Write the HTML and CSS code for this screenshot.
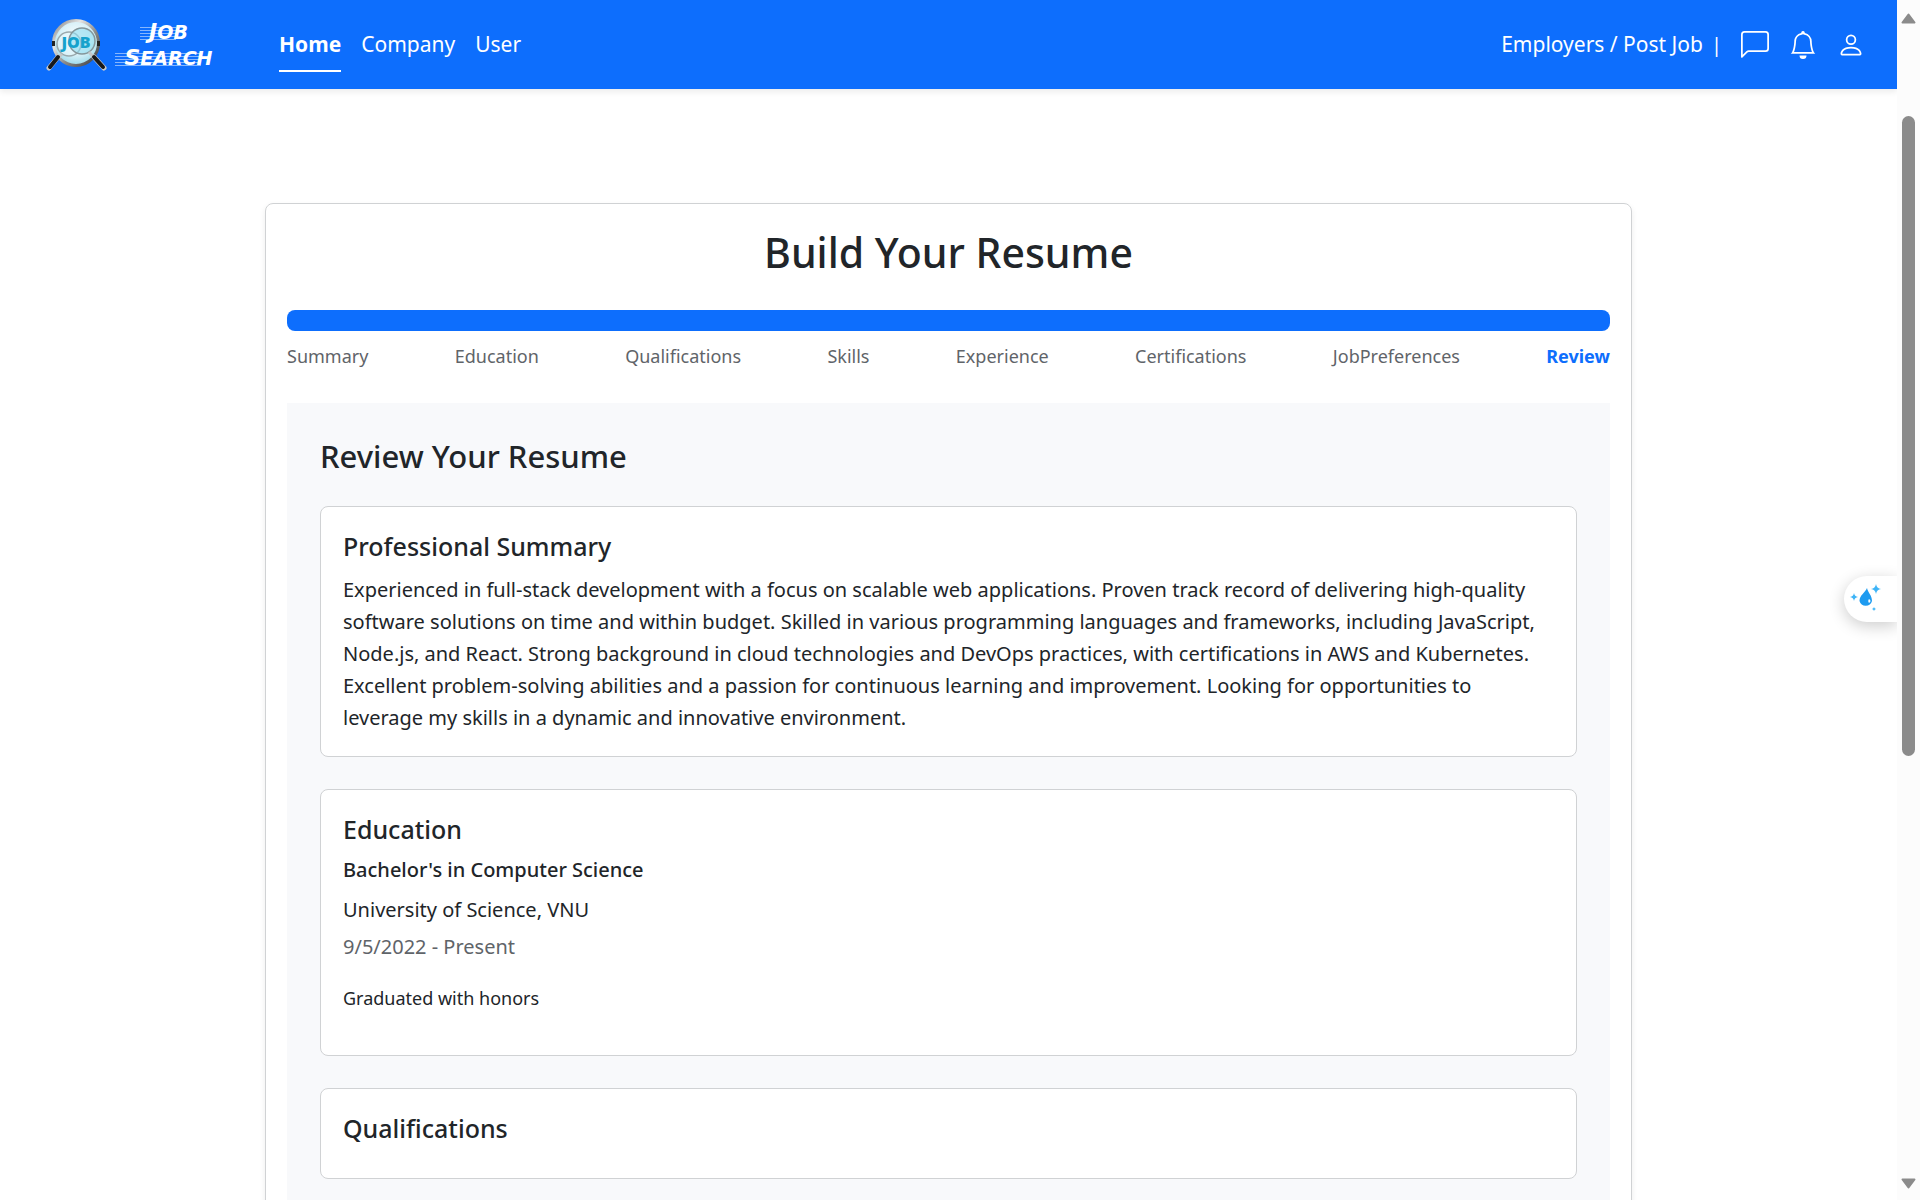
FILE: index.html
```html
<!DOCTYPE html>
<html lang="en">
<head>
<meta charset="utf-8">
<meta name="viewport" content="width=device-width, initial-scale=1">
<title>Build Your Resume</title>
<link rel="stylesheet" href="styles.css">
</head>
<body>
<div class="viewport">
  <div class="page">
    <header class="navbar">
      <a class="brand" href="#">
        <svg class="brand-icon" width="62" height="54" viewBox="0 0 62 54" aria-hidden="true">
          <defs>
            <linearGradient id="rim" x1="0" y1="0" x2="1" y2="1">
              <stop offset="0" stop-color="#777"/><stop offset=".3" stop-color="#e4e4e4"/><stop offset=".6" stop-color="#888"/><stop offset="1" stop-color="#3b3b3b"/>
            </linearGradient>
            <radialGradient id="glass" cx=".5" cy=".4" r=".6">
              <stop offset="0" stop-color="#fff"/><stop offset=".6" stop-color="#d9f1f8"/><stop offset="1" stop-color="#9bd9ea"/>
            </radialGradient>
          </defs>
          <circle cx="31" cy="25" r="22.500" fill="url(#glass)" stroke="url(#rim)" stroke-width="3"/>
          <path d="M8.500 23v5M53.500 23v5" stroke="#222" stroke-width="3"/>
          <circle cx="24" cy="26" r="12" fill="#e4f7fb" fill-opacity=".6" stroke="#9aa9ad" stroke-width="1.500"/>
          <circle cx="37" cy="23" r="13" fill="#8fdcf0" fill-opacity=".6" stroke="#84969b" stroke-width="1.500"/>
          <path d="M17 36l-5 5M44 34l6 7" stroke="#c4c8ca" stroke-width="3"/>
          <path d="M13 39L4 50M49 39l10 11" stroke="#c9c9c9" stroke-width="5" stroke-linecap="round"/>
          <path d="M13 39L5 49M49 39l9 10" stroke="#16181b" stroke-width="4" stroke-linecap="round"/>
          <text class="lens-text" x="31" y="30" text-anchor="middle">JOB</text>
        </svg>
        <span class="brand-text">
          <span class="brand-word"><span class="cap">J</span>OB</span>
          <span class="brand-word"><span class="cap">S</span>EARCH</span>
        </span>
      </a>
      <nav class="links">
        <a class="link active" href="#">Home</a>
        <a class="link" href="#">Company</a>
        <a class="link" href="#">User</a>
      </nav>
      <div class="actions">
        <a class="link" href="#">Employers / Post Job</a>
        <span class="divider">|</span>
        <button class="icon-button" type="button" aria-label="Messages">
          <svg width="28" height="28" viewBox="0 0 16 16" fill="currentColor"><path d="M14 1a1 1 0 0 1 1 1v8a1 1 0 0 1-1 1H4.414A2 2 0 0 0 3 11.586l-2 2V2a1 1 0 0 1 1-1zM2 0a2 2 0 0 0-2 2v12.793a.5.5 0 0 0 .854.353l2.853-2.853A1 1 0 0 1 4.414 12H14a2 2 0 0 0 2-2V2a2 2 0 0 0-2-2z"/></svg>
        </button>
        <button class="icon-button" type="button" aria-label="Notifications">
          <svg width="28" height="28" viewBox="0 0 16 16" fill="currentColor"><path d="M8 16a2 2 0 0 0 2-2H6a2 2 0 0 0 2 2M8 1.918l-.797.161A4 4 0 0 0 4 6c0 .628-.134 2.197-.459 3.742-.16.767-.376 1.566-.663 2.258h10.244c-.287-.692-.502-1.490-.663-2.258C12.134 8.197 12 6.628 12 6a4 4 0 0 0-3.203-3.920zM14.220 12c.223.447.481.801.780 1H1c.299-.199.557-.553.780-1C2.680 10.200 3 6.880 3 6c0-2.420 1.720-4.440 4.005-4.901a1 1 0 1 1 1.990 0A5 5 0 0 1 13 6c0 .880.320 4.200 1.220 6"/></svg>
        </button>
        <button class="icon-button" type="button" aria-label="Account">
          <svg width="28" height="28" viewBox="0 0 16 16" fill="currentColor"><path d="M8 8a3 3 0 1 0 0-6 3 3 0 0 0 0 6m2-3a2 2 0 1 1-4 0 2 2 0 0 1 4 0m4 8c0 1-1 1-1 1H3s-1 0-1-1 1-4 6-4 6 3 6 4m-1-.004c-.001-.246-.154-.986-.832-1.664C11.516 10.680 10.289 10 8 10s-3.516.680-4.168 1.332c-.678.678-.830 1.418-.832 1.664z"/></svg>
        </button>
      </div>
    </header>

    <main class="builder">
      <h1 class="title">Build Your Resume</h1>
      <div class="progress" role="progressbar" aria-label="Resume progress" aria-valuenow="100" aria-valuemin="0" aria-valuemax="100">
        <div class="progress-bar" style="width: 100%"></div>
      </div>
      <ol class="steps">
        <li>Summary</li>
        <li>Education</li>
        <li>Qualifications</li>
        <li>Skills</li>
        <li>Experience</li>
        <li>Certifications</li>
        <li>JobPreferences</li>
        <li class="current">Review</li>
      </ol>
      <section class="review">
        <h2 class="review-title">Review Your Resume</h2>
        <div class="cards">
          <article class="card">
            <h3 class="card-title">Professional Summary</h3>
            <p class="text">Experienced in full-stack development with a focus on scalable web applications. Proven track record of delivering high-quality software solutions on time and within budget. Skilled in various programming languages and frameworks, including JavaScript, Node.js, and React. Strong background in cloud technologies and DevOps practices, with certifications in AWS and Kubernetes. Excellent problem-solving abilities and a passion for continuous learning and improvement. Looking for opportunities to leverage my skills in a dynamic and innovative environment.</p>
          </article>
          <article class="card">
            <h3 class="card-title">Education</h3>
            <h4 class="degree">Bachelor's in Computer Science</h4>
            <p class="text school">University of Science, VNU</p>
            <p class="text dates">9/5/2022 - Present</p>
            <p class="note">Graduated with honors</p>
          </article>
          <article class="card">
            <h3 class="card-title">Qualifications</h3>
          </article>
        </div>
      </section>
    </main>

    <button class="assistant" type="button" aria-label="Assistant">
      <svg width="32" height="30" viewBox="0 0 32 30" aria-hidden="true">
        <path d="M17 4c1 5 5 7 5 13a6.500 6.500 0 0 1-12.500 0C9.500 11 15 9 17 4z" fill="#1e9bf0"/>
        <path d="M19 15c2 1 2 3 0 4-1-1-1-3 0-4z" fill="#fff"/>
        <path d="M26 0q.700 4.300 5 5-4.300.700-5 5-.700-4.300-5-5 4.300-.700 5-5zM4 9q.500 3.500 4 4-3.500.500-4 4-.500-3.500-4-4 3.500-.500 4-4zM24 23q.300 1.700 2 2-1.700.300-2 2-.300-1.700-2-2 1.700-.300 2-2z" fill="#3db4f7"/>
      </svg>
    </button>
  </div>

  <div class="scrollbar" aria-hidden="true">
    <svg class="arrow" width="15" height="11" viewBox="0 0 15 11"><path d="M7.500 1.500L13.500 9.500H1.500z" fill="#8b8b8b" stroke="#8b8b8b" stroke-width="2" stroke-linejoin="round"/></svg>
    <div class="track"><div class="thumb"></div></div>
    <svg class="arrow" width="15" height="11" viewBox="0 0 15 11"><path d="M7.500 9.500L13.500 1.500H1.500z" fill="#8b8b8b" stroke="#8b8b8b" stroke-width="2" stroke-linejoin="round"/></svg>
  </div>
</div>
</body>
</html>
```
FILE: styles.css
```css
* {
  box-sizing: border-box;
}

body {
  margin: 0;
  color: #212529;
  background: #fff;
  font-family: "Noto Sans", "Open Sans", sans-serif;
  font-size: 20px;
  line-height: 32px;
}

h1, h2, h3, h4, p, ol {
  margin: 0;
  padding: 0;
}

a {
  color: inherit;
  text-decoration: none;
}

button {
  border: 0;
  padding: 0;
  background: none;
  color: inherit;
  cursor: pointer;
}

svg {
  display: block;
}

.viewport {
  display: flex;
  height: 100vh;
  overflow: hidden;
}

.page {
  position: relative;
  flex: 1;
  min-width: 0;
  overflow: hidden;
}

/* Top bar */
.navbar {
  display: flex;
  align-items: center;
  height: 89px;
  padding: 0 32px 0 45px;
  background: #0d6efd;
  color: #fff;
  box-shadow: 0 3px 6px rgba(0, 0, 0, 0.075);
}

.brand {
  display: flex;
  align-items: center;
  gap: 4px;
}

.lens-text {
  font: 900 16px "Noto Sans", sans-serif;
  fill: #16a2cc;
}

.brand-text {
  display: flex;
  flex-direction: column;
  align-items: center;
  width: 106px;
}

.brand-word {
  position: relative;
  padding-left: 9px;
  font: italic bold 19px/26px "DejaVu Sans", sans-serif;
}

.brand-word::before {
  content: "";
  position: absolute;
  inset: 8px 12px 5px 0;
  background: repeating-linear-gradient(rgba(255, 255, 255, 0.5) 0 1px, transparent 1px 3px);
}

.cap {
  font-size: 22px;
}

.links {
  display: flex;
  gap: 20px;
  margin-left: 62px;
}

.link {
  padding: 11px 0 12px;
  font-size: 21px;
  line-height: 32px;
}

.active {
  padding-bottom: 10px;
  border-bottom: 2px solid #fff;
  font-weight: 700;
}

.actions {
  display: flex;
  align-items: center;
  margin-left: auto;
}

.divider {
  margin: 0 19px 0 8px;
}

.icon-button + .icon-button {
  margin-left: 20px;
}

/* Resume builder */
.builder {
  max-width: 1367px;
  margin: 114px auto 0;
  padding: 22px 21px;
  border: 1px solid #d0d2d4;
  border-radius: 8px;
  box-shadow: 0 3px 6px rgba(0, 0, 0, 0.075);
}

.title {
  font-size: 41px;
  font-weight: 500;
  line-height: 52px;
  text-align: center;
}

.progress {
  height: 21px;
  margin-top: 32px;
  border-radius: 8px;
  background: #e9ecef;
  overflow: hidden;
}

.progress-bar {
  height: 100%;
  background: #0d6efd;
}

.steps {
  display: flex;
  justify-content: space-between;
  margin: 11px 0 33px;
  list-style: none;
  color: #5f6469;
  font-size: 18px;
  line-height: 28px;
}

.current {
  color: #0d6efd;
  font-weight: 700;
}

.review {
  padding: 32px 33px;
  background: #f8f9fb;
}

.review-title {
  font-size: 31px;
  font-weight: 500;
  line-height: 42px;
}

.cards {
  display: grid;
  gap: 32px;
  margin-top: 29px;
}

.card {
  padding: 22px;
  border: 1px solid #d0d2d4;
  border-radius: 8px;
  background: #fff;
}

.card-title {
  margin-bottom: 11px;
  font-size: 25px;
  font-weight: 500;
  line-height: 34px;
}

.degree {
  font-size: 20px;
  font-weight: 500;
  line-height: 26px;
}

.school {
  margin-top: 11px;
}

.dates {
  margin-top: 5px;
  color: #5f6469;
}

.note {
  margin: 21px 0;
  font-size: 18px;
  line-height: 28px;
}

/* Floating assistant tab */
.assistant {
  position: absolute;
  top: 576px;
  right: 0;
  width: 53px;
  height: 46px;
  padding-left: 6px;
  border-radius: 23px 0 0 23px;
  background: #fff;
  box-shadow: 0 4px 16px rgba(0, 0, 0, 0.2);
}

/* Window scrollbar */
.scrollbar {
  display: flex;
  flex-direction: column;
  align-items: center;
  width: 23px;
  padding: 13px 0 11px;
  background: #fcfcfc;
}

.track {
  flex: 1;
  width: 13px;
  padding: 92px 0;
}

.thumb {
  height: 66%;
  border-radius: 7px;
  background: #8b8b8b;
}
```
